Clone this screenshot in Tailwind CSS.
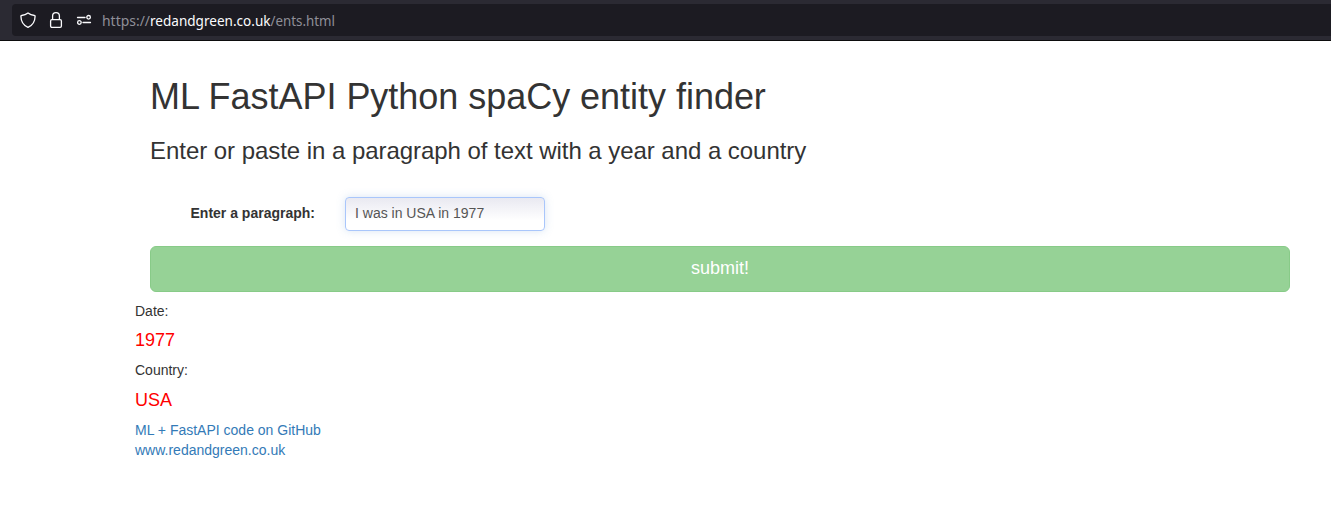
<!DOCTYPE html>
<html lang="en">
<head>
<meta charset="utf-8">
<title>ML FastAPI Python spaCy entity finder</title>
<script src="https://cdn.jsdelivr.net/npm/@tailwindcss/browser@4"></script>
</head>
<body class="h-[505px] overflow-hidden bg-white font-['Liberation_Sans',Arial,sans-serif] text-sm leading-5 text-[#333]">
<header class="h-[41px] border-b border-[#0c0c0d] bg-[#2b2a33] pt-1 pl-3">
  <div class="flex h-8 items-center rounded-l-[4px] bg-[#1c1b22] pl-2 text-[#fbfbfe]">
    <svg class="size-4" viewBox="0 0 16 16" fill="none" stroke="currentColor" stroke-width="1.3" stroke-linejoin="round"><path d="M8 .9C6.200 2.300 4.100 3.100 1.500 3.500c-.4 0-.6.3-.6.7C1 9.300 3.300 13.300 8 15.300c4.700-2 7-6 7.100-11.100 0-.4-.2-.7-.6-.7C11.900 3.100 9.800 2.300 8 .9z"/></svg>
    <svg class="ml-3 size-4" viewBox="0 0 16 16" fill="none" stroke="currentColor" stroke-width="1.3"><rect x="2.600" y="7.600" width="10.800" height="7.700" rx="1.300"/><path d="M4.600 7.600V4.100a3.400 3.400 0 0 1 6.800 0v3.500"/></svg>
    <svg class="ml-3 size-4" viewBox="0 0 16 16" fill="none" stroke="currentColor" stroke-width="1.300" stroke-linecap="round"><path d="M1.500 5.500h7.500M7 10.500h7.500"/><circle cx="12.600" cy="5.300" r="1.800"/><circle cx="3.400" cy="10.500" r="1.800"/></svg>
    <svg class="ml-[10px] h-8 w-[260px] overflow-visible font-['Noto_Sans','Open_Sans',sans-serif] text-sm"><text x="0" y="21.500" fill="#8f8f98" textLength="48" lengthAdjust="spacingAndGlyphs">https://</text><text x="48" y="21.500" fill="#fbfbfe" textLength="120.500" lengthAdjust="spacingAndGlyphs">redandgreen.co.uk</text><text x="168.500" y="21.500" fill="#8f8f98" textLength="64.500" lengthAdjust="spacingAndGlyphs">/ents.html</text></svg>
  </div>
</header>
<main class="pt-[36px] pr-[41px] pl-[135px]">
  <div class="pl-[15px]">
    <h1 class="text-[36px] leading-[40px] tracking-[-0.03px] whitespace-nowrap">ML FastAPI Python spaCy entity finder</h1>
    <h3 class="mt-[21px] text-[24px] leading-[26px] tracking-[-0.045px] whitespace-nowrap">Enter or paste in a paragraph of text with a year and a country</h3>
    <form class="mt-[33px]">
      <div class="flex items-start">
        <label for="p" class="w-[165px] pt-[6px] text-right font-bold">Enter a paragraph:</label>
        <input id="p" value="I was in USA in 1977" class="ml-[30px] h-[34px] w-[200px] rounded-[4px] border border-[#a9c6fb] bg-linear-to-b from-[#e9e9f1] to-white to-70% px-[9px] pb-[2px] text-sm text-[#555] shadow-[0_0_8px_rgba(100,150,210,0.25)]">
      </div>
      <button type="button" class="mt-[15px] block h-[46px] w-full rounded-[6px] border border-[#88cb88] bg-[#96d296] pb-[2px] text-[18px] leading-6 text-white">submit!</button>
    </form>
  </div>
  <p class="mt-[9px]">Date:</p>
  <h4 class="mt-[9px] text-[18px] leading-5 text-[#f00]">1977</h4>
  <p class="mt-[10px]">Country:</p>
  <h4 class="mt-[10px] text-[18px] leading-5 text-[#f00]">USA</h4>
  <div class="mt-[10px] flex flex-col items-start text-[#337ab7]">
    <a>ML + FastAPI code on GitHub</a>
    <a>www.redandgreen.co.uk</a>
  </div>
</main>
</body>
</html>
